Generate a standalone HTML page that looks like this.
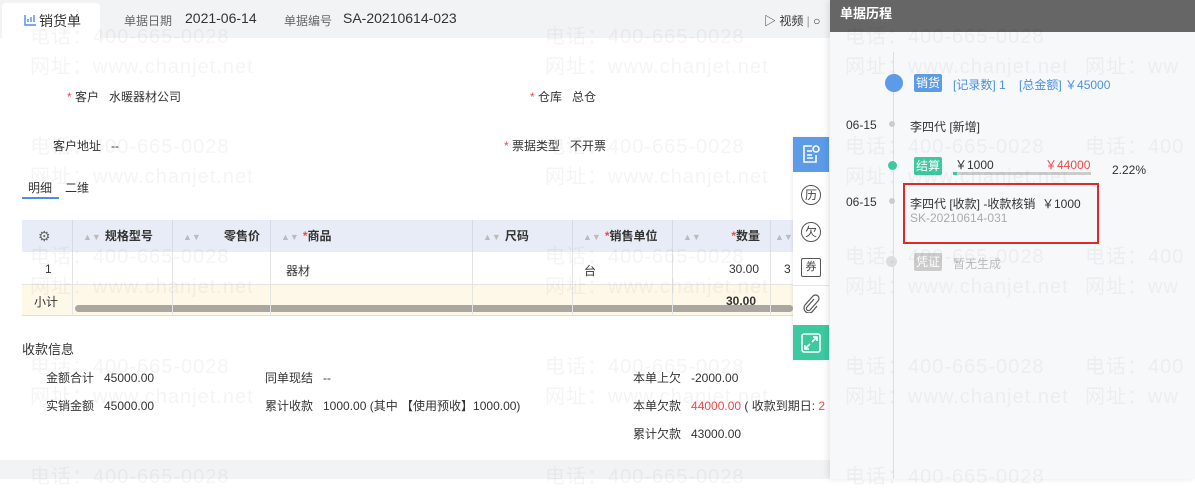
<!DOCTYPE html><html><head><meta charset="utf-8"><style>
*{margin:0;padding:0;box-sizing:border-box}
body{width:1195px;height:479px;overflow:hidden;position:relative;background:#fff;font-family:"Liberation Sans","Noto Sans CJK SC",sans-serif;font-size:12px;color:#333}
.a{position:absolute;white-space:nowrap}
.wm{position:absolute;font-size:20px;color:rgba(0,0,0,0.045);white-space:nowrap;font-family:"Liberation Sans","Noto Sans CJK SC",sans-serif;letter-spacing:1px}
.r{color:#f04848}
.th{position:absolute;top:220px;height:32px;line-height:32px;font-weight:bold;border-left:1px solid #d6dae4}
.cl{position:absolute;top:252px;height:64px;border-left:1px solid #e3e3e3}
.ar{color:#bbb;font-size:9px;margin-right:4px}
</style></head><body>
<div class="a" style="left:0;top:0;width:830px;height:38px;background:#f2f3f5"></div>
<div class="a" style="left:0;top:460px;width:830px;height:19px;background:#f2f3f5"></div>
<div class="a" style="left:2px;top:3px;width:98px;height:35px;background:#fff;border-radius:4px 4px 0 0"></div>
<svg class="a" style="left:24px;top:13px" width="13" height="13" viewBox="0 0 13 13"><path d="M1 2v10h11M4 9V6M7 9V4M10 9V2" stroke="#4a90e2" stroke-width="1.4" fill="none"/></svg>
<div class="a" style="left:39px;top:11px;font-size:14px;color:#333">销货单</div>
<div class="a" style="left:124px;top:12px;font-size:12px;color:#666">单据日期</div>
<div class="a" style="left:185px;top:10px;font-size:14px">2021-06-14</div>
<div class="a" style="left:284px;top:12px;color:#666">单据编号</div>
<div class="a" style="left:343px;top:10px;font-size:14px">SA-20210614-023</div>
<div class="a" style="left:764px;top:12px;color:#333">&#9655; 视频 <span style="color:#999">|</span> ○</div>

<div class="a" style="left:67px;top:88px"><span class="r">*</span> 客户 &nbsp; 水暖器材公司</div>
<div class="a" style="left:530px;top:88px"><span class="r">*</span> 仓库 &nbsp; 总仓</div>
<div class="a" style="left:53px;top:137px">客户地址 &nbsp; --</div>
<div class="a" style="left:504px;top:137px"><span class="r">*</span> 票据类型 &nbsp; 不开票</div>
<div class="a" style="left:28px;top:179px">明细</div><div class="a" style="left:65px;top:179px">二维</div>
<div class="a" style="left:22px;top:197px;width:37px;height:2px;background:#4a90e2"></div>

<div class="a" style="left:22px;top:220px;width:771px;height:32px;background:#e8ecf6"></div>
<div class="a" style="left:22px;top:284px;width:771px;height:32px;background:#fdf8e8;border-top:1px solid #e3e3e3;border-bottom:1px solid #ddd"></div>
<div class="a" style="left:75px;top:305px;width:718px;height:7px;background:#aaa6a0;border-radius:4px"></div>
<div class="a" style="left:38px;top:228px;font-size:14px;color:#666">⚙</div>
<div class="th" style="left:72px;width:100px;padding-left:10px"><span class="ar">▲▼</span>规格型号</div>
<div class="th" style="left:172px;width:98px;padding-left:10px"><span class="ar">▲▼</span><span style="float:right;margin-right:10px">零售价</span></div>
<div class="th" style="left:270px;width:202px;padding-left:10px"><span class="ar">▲▼</span><span class="r">*</span>商品</div>
<div class="th" style="left:472px;width:100px;padding-left:10px"><span class="ar">▲▼</span>尺码</div>
<div class="th" style="left:572px;width:100px;padding-left:10px"><span class="ar">▲▼</span><span class="r">*</span>销售单位</div>
<div class="th" style="left:672px;width:98px;padding-left:10px"><span class="ar">▲▼</span><span style="float:right;margin-right:10px"><span class="r">*</span>数量</span></div>
<div class="th" style="left:770px;width:23px;padding-left:4px"><span class="ar">▲▼</span></div>
<div class="cl" style="left:72px"></div><div class="cl" style="left:172px"></div><div class="cl" style="left:270px"></div><div class="cl" style="left:472px"></div><div class="cl" style="left:572px"></div><div class="cl" style="left:672px"></div><div class="cl" style="left:770px"></div>
<div class="a" style="left:45px;top:262px">1</div>
<div class="a" style="left:286px;top:262px">器材</div>
<div class="a" style="left:584px;top:262px">台</div>
<div class="a" style="left:729px;top:262px">30.00</div>
<div class="a" style="left:784px;top:262px">3</div>
<div class="a" style="left:34px;top:293px">小计</div>
<div class="a" style="left:726px;top:294px;font-weight:bold">30.00</div>

<div class="a" style="left:22px;top:339px;font-size:13px">收款信息</div>
<div class="a" style="left:46px;top:369px">金额合计 &nbsp; 45000.00</div>
<div class="a" style="left:46px;top:397px">实销金额 &nbsp; 45000.00</div>
<div class="a" style="left:265px;top:369px">同单现结 &nbsp; --</div>
<div class="a" style="left:265px;top:397px">累计收款 &nbsp; 1000.00 (其中 【使用预收】1000.00)</div>
<div class="a" style="left:633px;top:369px">本单上欠 &nbsp; -2000.00</div>
<div class="a" style="left:633px;top:397px">本单欠款 &nbsp; <span class="r">44000.00</span> ( 收款到期日: <span class="r">2</span></div>
<div class="a" style="left:633px;top:425px">累计欠款 &nbsp; 43000.00</div>

<div class="a" style="left:793px;top:137px;width:36px;height:223px;background:#fff;box-shadow:-1px 0 3px rgba(0,0,0,0.08)"></div>
<div class="a" style="left:793px;top:137px;width:36px;height:35px;background:#5b9be8"></div>
<svg class="a" style="left:801px;top:144px" width="20" height="20" viewBox="0 0 20 20" fill="none" stroke="#fff" stroke-width="1.6"><path d="M11 2H3v16h12v-7M6 7h5M6 11h5M6 14h6"/><circle cx="15" cy="5" r="3"/></svg>
<div class="a" style="left:801px;top:185px;width:20px;height:20px;border:1px solid #555;border-radius:50%;font-size:12px;text-align:center;line-height:18px;color:#444">历</div>
<div class="a" style="left:801px;top:222px;width:20px;height:20px;border:1px solid #555;border-radius:50%;font-size:12px;text-align:center;line-height:18px;color:#444">欠</div>
<div class="a" style="left:801px;top:258px;width:20px;height:19px;border:1px solid #555;border-radius:2px;font-size:11px;text-align:center;line-height:17px;color:#444">券</div>
<div class="a" style="left:793px;top:285px;width:36px;height:1px;background:#e5e5e5"></div>
<svg class="a" style="left:802px;top:293px" width="18" height="20" viewBox="0 0 18 20" fill="none" stroke="#555" stroke-width="1.2"><path d="M12 6l-7 8a2 2 0 0 0 3 3l8-9a3.5 3.5 0 0 0-5-5l-8 9a5 5 0 0 0 7 7l5-6"/></svg>
<div class="a" style="left:793px;top:325px;width:36px;height:35px;background:#3cc9a0"></div>
<svg class="a" style="left:800px;top:332px" width="22" height="22" viewBox="0 0 22 22" fill="none" stroke="#fff" stroke-width="1.6"><rect x="2" y="2" width="18" height="18" rx="2"/><path d="M13 5h4v4M17 5l-5 5M9 17H5v-4M5 17l5-5"/></svg>

<div class="a" style="left:830px;top:0;width:365px;height:479px;background:#f7f8fa;box-shadow:-2px 0 6px rgba(0,0,0,0.1)"></div>
<div class="a" style="left:830px;top:0;width:365px;height:32px;background:#666"></div>
<div class="a" style="left:840px;top:3px;font-size:13px;color:#fff;font-weight:bold">单据历程</div>
<div class="a" style="left:893px;top:52px;width:1px;height:427px;background:#ddd"></div>
<div class="a" style="left:885px;top:74px;width:18px;height:18px;border-radius:50%;background:#5b9be8"></div>
<div class="a" style="left:914px;top:74px;width:28px;height:18px;background:#5b9be8;color:#fff;text-align:center;line-height:18px;border-radius:2px">销货</div>
<div class="a" style="left:953px;top:76px;color:#4a90e2">[记录数] 1 &nbsp; &nbsp;[总金额] ￥45000</div>
<div class="a" style="left:846px;top:118px">06-15</div>
<div class="a" style="left:889px;top:121px;width:6px;height:6px;border-radius:50%;background:#ccc"></div>
<div class="a" style="left:910px;top:118px">李四代 [新增]</div>
<div class="a" style="left:888px;top:161px;width:9px;height:9px;border-radius:50%;background:#3cc9a0"></div>
<div class="a" style="left:914px;top:157px;width:28px;height:18px;background:#3cc9a0;color:#fff;text-align:center;line-height:18px;border-radius:2px">结算</div>
<div class="a" style="left:955px;top:156px">￥1000</div>
<div class="a r" style="left:1045px;top:156px">￥44000</div>
<div class="a" style="left:953px;top:172px;width:138px;height:3px;background:#ccc"></div>
<div class="a" style="left:953px;top:172px;width:4px;height:3px;background:#3cc9a0"></div>
<div class="a" style="left:1112px;top:163px">2.22%</div>
<div class="a" style="left:846px;top:195px">06-15</div>
<div class="a" style="left:889px;top:198px;width:6px;height:6px;border-radius:50%;background:#ccc"></div>
<div class="a" style="left:903px;top:183px;width:196px;height:61px;border:2px solid #e02a2a"></div>
<div class="a" style="left:910px;top:195px">李四代 [收款] -收款核销 &nbsp;￥1000</div>
<div class="a" style="left:910px;top:211px;color:#aaa">SK-20210614-031</div>
<div class="a" style="left:886px;top:256px;width:11px;height:11px;border-radius:50%;background:#ddd"></div>
<div class="a" style="left:914px;top:253px;width:28px;height:18px;background:#ccc;color:#fff;text-align:center;line-height:18px;border-radius:2px">凭证</div>
<div class="a" style="left:953px;top:255px;color:#bbb">暂无生成</div>

<div class="wm" style="left:30px;top:20px">电话：400-665-0028</div><div class="wm" style="left:30px;top:50px">网址：www.chanjet.net</div>
<div class="wm" style="left:545px;top:20px">电话：400-665-0028</div><div class="wm" style="left:545px;top:50px">网址：www.chanjet.net</div>
<div class="wm" style="left:30px;top:130px">电话：400-665-0028</div><div class="wm" style="left:30px;top:160px">网址：www.chanjet.net</div>
<div class="wm" style="left:545px;top:130px">电话：400-665-0028</div><div class="wm" style="left:545px;top:160px">网址：www.chanjet.net</div>
<div class="wm" style="left:30px;top:240px">电话：400-665-0028</div><div class="wm" style="left:30px;top:270px">网址：www.chanjet.net</div>
<div class="wm" style="left:545px;top:240px">电话：400-665-0028</div><div class="wm" style="left:545px;top:270px">网址：www.chanjet.net</div>
<div class="wm" style="left:30px;top:350px">电话：400-665-0028</div><div class="wm" style="left:30px;top:380px">网址：www.chanjet.net</div>
<div class="wm" style="left:545px;top:350px">电话：400-665-0028</div><div class="wm" style="left:545px;top:380px">网址：www.chanjet.net</div>
<div class="wm" style="left:30px;top:460px">电话：400-665-0028</div><div class="wm" style="left:545px;top:460px">电话：400-665-0028</div>
<div class="wm" style="left:845px;top:20px">电话：400-665-0028</div><div class="wm" style="left:845px;top:50px">网址：www.chanjet.net</div>
<div class="wm" style="left:845px;top:130px">电话：400-665-0028</div><div class="wm" style="left:845px;top:160px">网址：www.chanjet.net</div>
<div class="wm" style="left:845px;top:240px">电话：400-665-0028</div><div class="wm" style="left:845px;top:270px">网址：www.chanjet.net</div>
<div class="wm" style="left:845px;top:350px">电话：400-665-0028</div><div class="wm" style="left:845px;top:380px">网址：www.chanjet.net</div>
<div class="wm" style="left:845px;top:460px">电话：400-665-0028</div>
<div class="wm" style="left:1085px;top:130px">电话：400</div><div class="wm" style="left:1085px;top:240px">电话：400</div><div class="wm" style="left:1085px;top:350px">电话：400</div><div class="wm" style="left:1085px;top:50px">网址：ww</div><div class="wm" style="left:1085px;top:270px">网址：ww</div><div class="wm" style="left:1085px;top:380px">网址：ww</div>
</body></html>
